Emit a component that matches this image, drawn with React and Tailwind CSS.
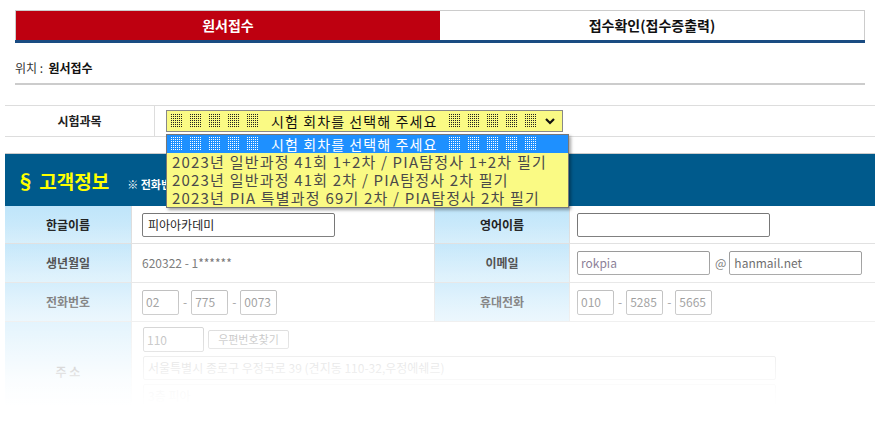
import React from "react";

function Dots({ color = "#000" }) {
  const dots = [];
  for (let c = 0; c < 6; c++) {
    for (let r = 0; r < 7; r++) {
      dots.push(<rect key={c + "-" + r} x={c * 2} y={r * 2} width="1" height="1" fill={color} />);
    }
  }
  return (
    <svg width="12" height="14" viewBox="0 0 12 14" className="inline-block shrink-0">
      {dots}
    </svg>
  );
}

function DotRun({ color }) {
  return (
    <span className="inline-flex gap-[7px] items-center shrink-0">
      <Dots color={color} />
      <Dots color={color} />
      <Dots color={color} />
      <Dots color={color} />
      <Dots color={color} />
    </span>
  );
}

const font = "font-['Noto_Sans_CJK_KR','Noto_Sans',sans-serif]";

function Label({ children, className = "" }) {
  return (
    <div className={"shrink-0 flex items-center justify-center bg-gradient-to-b from-[#bfe5fa] to-[#d3edfb] text-[12px] font-bold text-[#222] border-r border-[#ddd] " + className}>
      {children}
    </div>
  );
}

function SmallInput({ value, w }) {
  return (
    <div className={"shrink-0 h-[25px] border border-[#999] rounded-[2px] flex items-center px-[3px] text-[12px] text-[#555] bg-white whitespace-nowrap overflow-hidden " + w}>
      {value}
    </div>
  );
}

export default function App() {
  return (
    <div className={"relative w-[880px] h-[422px] overflow-hidden bg-white " + font}>
      <div className="px-[15px] pt-[10px]">
        <div className="flex h-[33px] border-b-[3px] border-[#1a4c82]">
          <div className="flex-1 bg-[#be0010] border-t border-l border-[#ccc] flex items-center justify-center text-[14px] font-bold text-white">
            원서접수
          </div>
          <div className="flex-1 border-t border-r border-[#ccc] flex items-center justify-center text-[14px] font-bold text-[#111]">
            접수확인(접수증출력)
          </div>
        </div>
        <div className="h-[42px] flex items-start pt-[16px] text-[12px] text-[#333] border-b-2 border-[#ccc]">
          위치 :&nbsp;&nbsp;<span className="font-bold text-[#111]">원서접수</span>
        </div>
      </div>

      <div className="mx-[5px] mt-[20px]">
        <div className="flex h-[32px] border-t border-b border-[#ddd]">
          <div className="w-[150px] flex items-center justify-center text-[12px] font-bold text-[#222] border-r border-[#ddd]">
            시험과목
          </div>
          <div className="flex items-center pl-[11px]">
            <div className="w-[397px] h-[22px] bg-[#fafa84] border border-[#888] flex items-center pl-[4px] pr-[6px] text-[14px] text-[#111] whitespace-nowrap">
              <DotRun color="#222" />
              <span className="ml-[12px] mr-[11px] tracking-[1.1px]">시험 회차를 선택해 주세요</span>
              <DotRun color="#222" />
              <svg width="12" height="10" viewBox="0 0 12 10" className="ml-auto">
                <path d="M2 3 L6 7 L10 3" stroke="#111" strokeWidth="2.2" fill="none" />
              </svg>
            </div>
          </div>
        </div>

        <div className="mt-[16px] border-t border-[#ccc] h-[53px] bg-[#005a8c] flex items-center pl-[11px] pt-[3px]">
          <span className="text-[19px] font-bold text-[#ffff00]">§ 고객정보</span>
          <span className="ml-[18px] mt-[5px] text-[11px] font-bold text-white">※ 전화번호 및 이메일을 정확히 입력해 주세요.</span>
        </div>

        <div className="flex h-[38px] border-b border-[#ddd]">
          <Label className="w-[127px]">한글이름</Label>
          <div className="w-[303px] shrink-0 flex items-center pl-[10px] border-r border-[#ddd]">
            <div className="w-[193px] h-[24px] border border-[#777] rounded-[2px] flex items-center px-[5px] text-[12px] text-[#222]">
              피아아카데미
            </div>
          </div>
          <Label className="w-[135px]">영어이름</Label>
          <div className="flex-1 flex items-center pl-[7px]">
            <div className="w-[193px] h-[24px] border border-[#777] rounded-[2px]"></div>
          </div>
        </div>

        <div className="flex h-[39px] border-b border-[#ddd]">
          <Label className="w-[127px]">생년월일</Label>
          <div className="w-[303px] shrink-0 flex items-center pl-[10px] border-r border-[#ddd] text-[12px] text-[#555]">
            620322 - 1******
          </div>
          <Label className="w-[135px]">이메일</Label>
          <div className="flex-1 flex items-center pl-[7px] text-[12px] text-[#555]">
            <div className="w-[133px] h-[24px] border border-[#888] rounded-[2px] flex items-center px-[3px] text-[#6a5a7a]">rokpia</div>
            <span className="ml-[5px] mr-[3px]">@</span>
            <div className="w-[133px] h-[24px] border border-[#888] rounded-[2px] flex items-center px-[4px] text-[#444]">hanmail.net</div>
          </div>
        </div>

        <div className="flex h-[39px] border-b border-[#ddd]">
          <Label className="w-[127px]">전화번호</Label>
          <div className="w-[303px] shrink-0 flex items-center pl-[10px] border-r border-[#ddd] text-[12px] text-[#555] gap-[4px]">
            <SmallInput value="02" w="w-[37px]" />
            <span>-</span>
            <SmallInput value="775" w="w-[37px]" />
            <span>-</span>
            <SmallInput value="0073" w="w-[37px]" />
          </div>
          <Label className="w-[135px]">휴대전화</Label>
          <div className="flex-1 flex items-center pl-[7px] text-[12px] text-[#555] gap-[4px]">
            <SmallInput value="010" w="w-[37px]" />
            <span>-</span>
            <SmallInput value="5285" w="w-[37px]" />
            <span>-</span>
            <SmallInput value="5665" w="w-[37px]" />
          </div>
        </div>

        <div className="flex h-[100px] border-b border-[#ddd]">
          <Label className="w-[127px]">주 소</Label>
          <div className="flex-1 flex flex-col pl-[11px] pt-[5px] gap-[4px] text-[12px] text-[#555]">
            <div className="flex items-center gap-[4px]">
              <SmallInput value="110" w="w-[61px] h-[24px]" />
              <div className="h-[19px] w-[81px] border border-[#aaa] rounded-[2px] flex items-center justify-center text-[11px] text-[#666]">우편번호찾기</div>
            </div>
            <div className="w-[633px] h-[24px] border border-[#bbb] rounded-[2px] flex items-center px-[4px] text-[#888]">
              서울특별시 종로구 우정국로 39 (견지동 110-32,우정에쉐르)
            </div>
            <div className="w-[633px] h-[24px] border border-[#ccc] rounded-[2px] flex items-center px-[4px] text-[#999]">
              3층 피아
            </div>
          </div>
        </div>
      </div>

      <div className="pointer-events-none absolute left-0 right-0 top-[225px] bottom-0 bg-gradient-to-b from-transparent from-0% via-white/90 via-[78%] to-white to-[92%]"></div>

      <div className="absolute left-[166px] top-[134px] w-[403px] border border-[#777] bg-[#fafa84] shadow-[2px_2px_3px_rgba(0,0,0,0.35)] text-[15px] leading-[18px] text-[#4a4a4a] whitespace-nowrap">
        <div className="h-[18px] bg-[#1e90ff] text-white flex items-center pl-[4px] text-[14px]">
          <DotRun color="#fff" />
          <span className="ml-[12px] mr-[11px] tracking-[1.1px]">시험 회차를 선택해 주세요</span>
          <DotRun color="#fff" />
        </div>
        <div className="pl-[5px] tracking-[1.2px]">2023년 일반과정 41회 1+2차 / PIA탐정사 1+2차 필기</div>
        <div className="pl-[5px] tracking-[1.2px]">2023년 일반과정 41회 2차 / PIA탐정사 2차 필기</div>
        <div className="pl-[5px] tracking-[1.2px]">2023년 PIA 특별과정 69기 2차 / PIA탐정사 2차 필기</div>
      </div>
    </div>
  );
}
